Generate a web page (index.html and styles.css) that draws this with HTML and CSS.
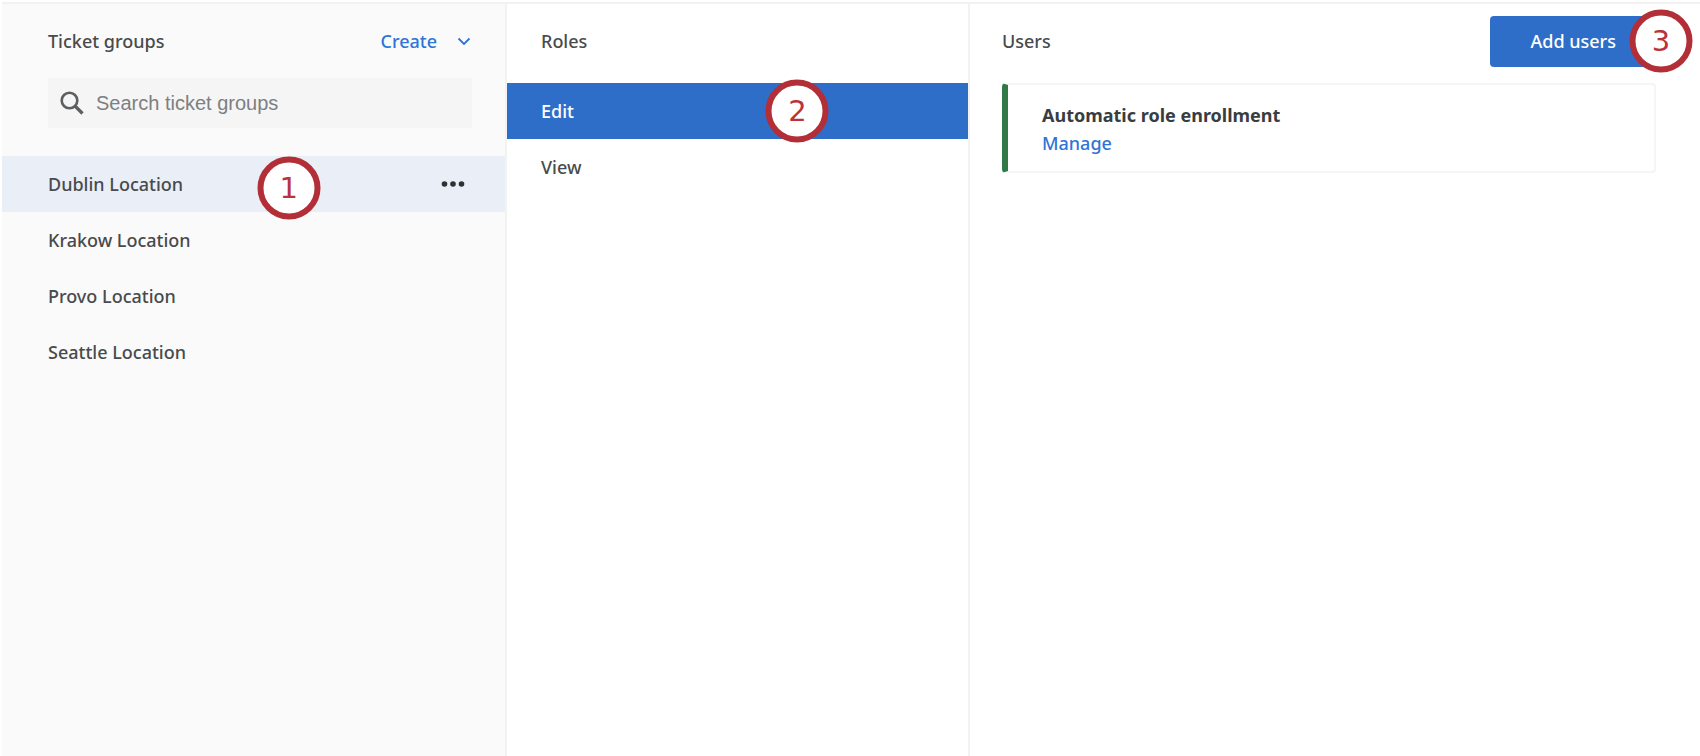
FILE: index.html
```html
<!DOCTYPE html>
<html lang="en">
<head>
    <meta charset="UTF-8">
    <meta name="viewport" content="width=device-width, initial-scale=1.0">
    <title>Ticket groups</title>
    <link rel="stylesheet" href="styles.css">
</head>
<body>
    <main class="panels">
        <!-- Ticket groups -->
        <section class="panel groups">
            <header class="panel-header">
                <h2>Ticket groups</h2>
                <button type="button" class="create">
                    Create
                    <svg width="14" height="14" viewBox="0 0 14 14" aria-hidden="true">
                        <path d="M1.5 4.5 L7 10 L12.5 4.5" fill="none" stroke="currentColor" stroke-width="1.8"/>
                    </svg>
                </button>
            </header>
            <div class="search">
                <svg width="24" height="24" viewBox="0 0 24 24" aria-hidden="true">
                    <circle cx="9.5" cy="9.5" r="7.8" fill="none" stroke="currentColor" stroke-width="2.6"/>
                    <path d="M15 15 L22.5 22.5" stroke="currentColor" stroke-width="3.2"/>
                </svg>
                <input type="text" aria-label="Search ticket groups" placeholder="Search ticket groups">
            </div>
            <ul class="list">
                <li class="selected">
                    <a href="#">Dublin Location</a>
                    <button type="button" class="more" aria-label="More options">
                        <svg width="24" height="8" viewBox="0 0 24 8" aria-hidden="true">
                            <circle cx="3.5" cy="4" r="2.8"/>
                            <circle cx="12" cy="4" r="2.8"/>
                            <circle cx="20.5" cy="4" r="2.8"/>
                        </svg>
                    </button>
                    <span class="badge badge-group">1</span>
                </li>
                <li><a href="#">Krakow Location</a></li>
                <li><a href="#">Provo Location</a></li>
                <li><a href="#">Seattle Location</a></li>
            </ul>
        </section>

        <!-- Roles -->
        <section class="panel roles">
            <header class="panel-header">
                <h2>Roles</h2>
            </header>
            <ul class="list">
                <li class="active">
                    <a href="#">Edit</a>
                    <span class="badge badge-role">2</span>
                </li>
                <li><a href="#">View</a></li>
            </ul>
        </section>

        <!-- Users -->
        <section class="panel users">
            <header class="panel-header">
                <h2>Users</h2>
                <div class="add">
                    <button type="button" class="add-users">Add users</button>
                    <span class="badge badge-add">3</span>
                </div>
            </header>
            <div class="card">
                <h3>Automatic role enrollment</h3>
                <a href="#">Manage</a>
            </div>
        </section>
    </main>
</body>
</html>
```
FILE: styles.css
```css
* {
    box-sizing: border-box;
}

body {
    margin: 0;
    background-color: #fff;
    color: #484b4d;
    font-family: "Noto Sans", "Open Sans", sans-serif;
    font-size: 18px;
    font-weight: 500;
    line-height: 28px;
}

h2,
h3,
ul {
    margin: 0;
    padding: 0;
}

h2 {
    font-size: 18px;
    font-weight: 500;
}

a {
    text-decoration: none;
}

button {
    border: none;
    padding: 0;
    background: none;
    font: inherit;
    cursor: pointer;
}

.panels {
    display: grid;
    grid-template-columns: 505fr 463fr 730fr;
    min-height: 100vh;
    padding: 2px 0 0 2px;
}

.panel {
    border-top: 2px solid #f2f2f2;
    border-right: 2px solid #f2f2f2;
}

.panel-header {
    display: flex;
    align-items: center;
    justify-content: space-between;
    height: 74px;
}

/* Ticket groups */
.groups {
    background-color: #fafafa;
}

.groups .panel-header {
    padding: 0 34px 0 46px;
}

.create {
    display: flex;
    align-items: center;
    gap: 20px;
    color: #2f74d6;
}

.search {
    display: flex;
    align-items: center;
    gap: 12px;
    height: 50px;
    margin: 0 33px 28px 46px;
    padding: 0 12px;
    background-color: #f5f5f5;
    color: #5c5f61;
}

.search input {
    flex: 1;
    min-width: 0;
    border: none;
    padding: 0;
    background: none;
    color: #3f4244;
    font: 20px "Liberation Sans", Arial, sans-serif;
}

.search input::placeholder {
    color: #7d7f81;
    opacity: 1;
}

/* Rows */
.list {
    list-style: none;
}

.list li {
    position: relative;
    display: flex;
    align-items: center;
    height: 56px;
    padding: 0 40px 0 46px;
}

.list a {
    flex: 1;
    color: inherit;
}

.selected {
    background-color: #e9eef7;
}

.more {
    display: flex;
    fill: #2f3133;
}

.roles .panel-header {
    margin-bottom: 5px;
    padding: 0 34px;
}

.roles .list li {
    padding: 0 34px;
}

.roles .active {
    background-color: #2f6ec8;
    color: #fff;
}

/* Users */
.users {
    border-right: none;
    padding: 0 44px 0 32px;
}

.users .panel-header {
    margin-bottom: 5px;
}

.add {
    position: relative;
}

.add-users {
    display: block;
    height: 51px;
    padding: 0 40px;
    border-radius: 4px;
    background-color: #2f6ec8;
    color: #fff;
}

.card {
    padding: 16px 34px 14px;
    border: 2px solid #f5f5f5;
    border-left: 6px solid #317a48;
    border-radius: 4px;
}

.card h3 {
    color: #3a3d3f;
    font-size: 18px;
    font-weight: 700;
}

.card a {
    display: block;
    color: #2f74d6;
}

/* Numbered markers */
.badge {
    position: absolute;
    top: 50%;
    width: 63px;
    height: 63px;
    border: 6px solid #b22f37;
    border-radius: 50%;
    transform: translate(-50%, -50%);
    background-color: #fff;
    color: #b9323c;
    font-family: "DejaVu Sans", sans-serif;
    font-size: 29px;
    font-weight: 400;
    line-height: 50px;
    text-align: center;
}

.badge-group {
    top: 57%;
    left: 57%;
}

.badge-role {
    left: 63%;
}

.badge-add {
    left: 103%;
}
```
